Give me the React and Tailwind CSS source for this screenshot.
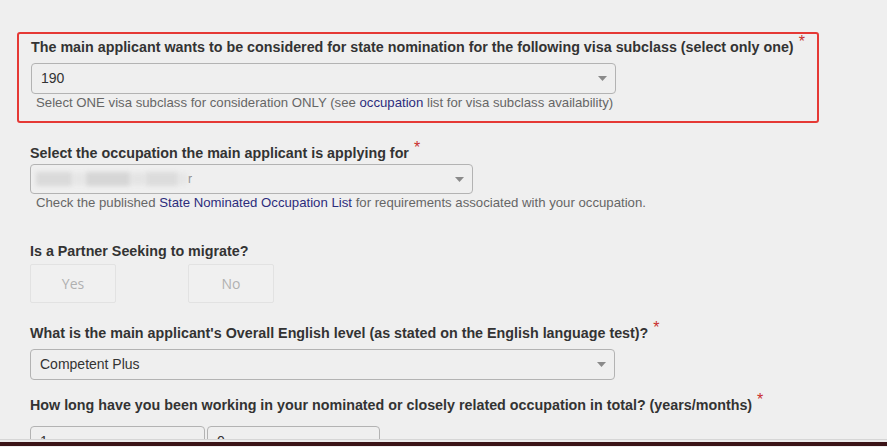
import React from "react";

function Caret() {
  return (
    <svg width="9" height="5" viewBox="0 0 9 5" className="shrink-0">
      <path d="M0 0 L9 0 L4.5 5 Z" fill="#8a8a8a" />
    </svg>
  );
}

function Star() {
  return (
    <span className="relative top-[-5px] ml-[5px] text-[16px] font-normal text-[#c9302c]">*</span>
  );
}

function Select({ value, className = "", children }) {
  return (
    <div
      className={`flex items-center justify-between rounded-[4px] border border-[#b3b3b3] bg-[#efefef] pl-[9px] pr-[8px] text-[14px] text-[#333] ${className}`}
    >
      <span className="flex items-center">{children ?? value}</span>
      <Caret />
    </div>
  );
}

export default function App() {
  return (
    <div className="flex h-[447px] w-[887px] flex-col bg-[#efefef] font-['Liberation_Sans',Arial,sans-serif]">
      <div className="h-[440px] overflow-hidden border-b border-[#d6d6d6]">
        <div className="ml-[17px] w-[802px] pt-[32px]">
          {/* Highlighted visa subclass block */}
          <div className="rounded-[3px] border-2 border-[#e53935] px-[12px] pb-[10px] pt-[3px]">
            <div className="h-[20px] text-[14.3px] font-bold leading-[20px] text-[#333]">
              The main applicant wants to be considered for state nomination for the following visa subclass (select only one)
              <Star />
            </div>
            <Select value="190" className="mt-[6px] h-[31px] w-[585px]" />
            <div className="mt-[1px] pl-[5px] text-[13.2px] leading-[16px] text-[#666]">
              Select ONE visa subclass for consideration ONLY (see{" "}
              <span className="text-[#2c2c7c]">occupation</span> list for visa subclass availability)
            </div>
          </div>

          {/* Occupation */}
          <div className="px-[13px] pt-[20px]">
            <div className="h-[20px] text-[14.3px] font-bold leading-[20px] text-[#333]">
              Select the occupation the main applicant is applying for
              <Star />
            </div>
            <Select className="mt-[1px] h-[30px] w-[443px] !pl-[5px]">
              <span className="flex items-center gap-[1px] blur-[2px]">
                <span className="h-[14px] w-[36px] bg-[#dadada]" />
                <span className="h-[12px] w-[12px] bg-[#e6e6e6]" />
                <span className="h-[14px] w-[44px] bg-[#d6d6d6]" />
                <span className="h-[12px] w-[14px] bg-[#e4e4e4]" />
                <span className="h-[14px] w-[32px] bg-[#dcdcdc]" />
                <span className="h-[12px] w-[8px] bg-[#e6e6e6]" />
              </span>
              <span className="ml-[1px] text-[12px] text-[#888]">r</span>
            </Select>
            <div className="mt-[1px] pl-[6px] text-[13.2px] leading-[16px] text-[#666]">
              Check the published{" "}
              <span className="text-[#2c2c7c]">State Nominated Occupation List</span> for requirements associated with your occupation.
            </div>
          </div>

          {/* Partner */}
          <div className="px-[13px] pt-[30px]">
            <div className="h-[20px] text-[14.3px] font-bold leading-[20px] text-[#333]">
              Is a Partner Seeking to migrate?
            </div>
            <div className="mt-[3px] flex gap-[72px]">
              <div className="flex h-[39px] w-[86px] items-center justify-center rounded-[2px] border border-[#e2e2e2] bg-[#f0f0f0] font-['Open_Sans',sans-serif] text-[14px] text-[#b0b0b0]">
                Yes
              </div>
              <div className="flex h-[39px] w-[86px] items-center justify-center rounded-[2px] border border-[#e2e2e2] bg-[#f0f0f0] font-['Open_Sans',sans-serif] text-[14px] text-[#b0b0b0]">
                No
              </div>
            </div>
          </div>

          {/* English level */}
          <div className="px-[13px] pt-[20px]">
            <div className="h-[20px] text-[14.3px] font-bold leading-[20px] text-[#333]">
              What is the main applicant's Overall English level (as stated on the English language test)?
              <Star />
            </div>
            <Select value="Competent Plus" className="mt-[6px] h-[31px] w-[585px]" />
          </div>

          {/* Work duration */}
          <div className="px-[13px] pt-[15px]">
            <div className="h-[20px] text-[14.3px] font-bold leading-[20px] text-[#333]">
              How long have you been working in your nominated or closely related occupation in total? (years/months)
              <Star />
            </div>
            <div className="mt-[11px] flex gap-[2px]">
              <Select value="1" className="h-[31px] w-[175px]" />
              <Select value="0" className="h-[31px] w-[173px]" />
            </div>
          </div>
        </div>
      </div>
      <div className="h-[2px] bg-[#ececec]" />
      <div className="h-[4px] bg-[#3b1418]" />
    </div>
  );
}
